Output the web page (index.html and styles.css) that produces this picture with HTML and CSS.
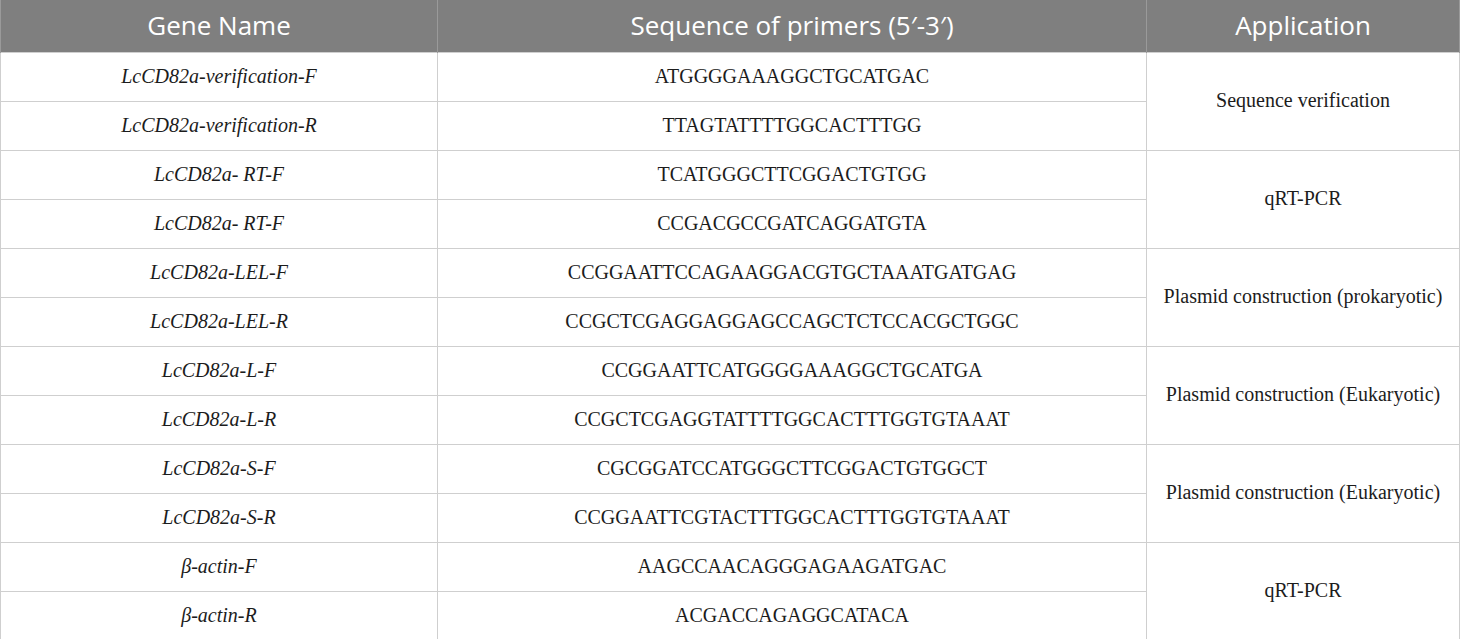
FILE: index.html
```html
<!DOCTYPE html>
<html>
<head>
<meta charset="utf-8">
<link rel="stylesheet" href="styles.css">
</head>
<body>
<table class="primers">
  <colgroup>
    <col class="c1">
    <col class="c2">
    <col class="c3">
  </colgroup>
  <thead>
    <tr class="head">
      <th>Gene Name</th>
      <th>Sequence of primers (5′-3′)</th>
      <th>Application</th>
    </tr>
  </thead>
  <tbody>
    <tr><td class="gene">LcCD82a-verification-F</td><td>ATGGGGAAAGGCTGCATGAC</td><td rowspan="2">Sequence verification</td></tr>
    <tr><td class="gene">LcCD82a-verification-R</td><td>TTAGTATTTTGGCACTTTGG</td></tr>
    <tr><td class="gene">LcCD82a- RT-F</td><td>TCATGGGCTTCGGACTGTGG</td><td rowspan="2">qRT-PCR</td></tr>
    <tr><td class="gene">LcCD82a- RT-F</td><td>CCGACGCCGATCAGGATGTA</td></tr>
    <tr><td class="gene">LcCD82a-LEL-F</td><td>CCGGAATTCCAGAAGGACGTGCTAAATGATGAG</td><td rowspan="2">Plasmid construction (prokaryotic)</td></tr>
    <tr><td class="gene">LcCD82a-LEL-R</td><td>CCGCTCGAGGAGGAGCCAGCTCTCCACGCTGGC</td></tr>
    <tr><td class="gene">LcCD82a-L-F</td><td>CCGGAATTCATGGGGAAAGGCTGCATGA</td><td rowspan="2">Plasmid construction (Eukaryotic)</td></tr>
    <tr><td class="gene">LcCD82a-L-R</td><td>CCGCTCGAGGTATTTTGGCACTTTGGTGTAAAT</td></tr>
    <tr><td class="gene">LcCD82a-S-F</td><td>CGCGGATCCATGGGCTTCGGACTGTGGCT</td><td rowspan="2">Plasmid construction (Eukaryotic)</td></tr>
    <tr><td class="gene">LcCD82a-S-R</td><td>CCGGAATTCGTACTTTGGCACTTTGGTGTAAAT</td></tr>
    <tr><td class="gene">β-actin-F</td><td>AAGCCAACAGGGAGAAGATGAC</td><td rowspan="2">qRT-PCR</td></tr>
    <tr><td class="gene">β-actin-R</td><td>ACGACCAGAGGCATACA</td></tr>
  </tbody>
</table>
</body>
</html>
```
FILE: styles.css
```css
html, body {
  margin: 0;
  padding: 0;
  background: #ffffff;
}

.primers {
  width: 1459px;
  border-collapse: collapse;
  table-layout: fixed;
  font-family: "Liberation Serif", "Times New Roman", serif;
  font-size: 20px;
  color: #1c1c1c;
}

.c1 { width: 437px; }
.c2 { width: 709px; }
.c3 { width: 313px; }

.head {
  height: 52px;
  background: #7f7f7f;
}

.head th {
  font-family: "Open Sans", "Noto Sans", sans-serif;
  font-weight: 400;
  font-size: 26px;
  color: #ffffff;
  text-align: center;
  vertical-align: middle;
  padding: 0 8px 2px;
  border-left: 1px solid #9a9a9a;
  border-right: 1px solid #9a9a9a;
}

.primers tbody tr {
  height: 49px;
}

.primers td {
  border: 1.5px solid #cfcfcf;
  text-align: center;
  vertical-align: middle;
  padding: 0 8px 1px;
}

.primers td.gene {
  font-style: italic;
}
```
